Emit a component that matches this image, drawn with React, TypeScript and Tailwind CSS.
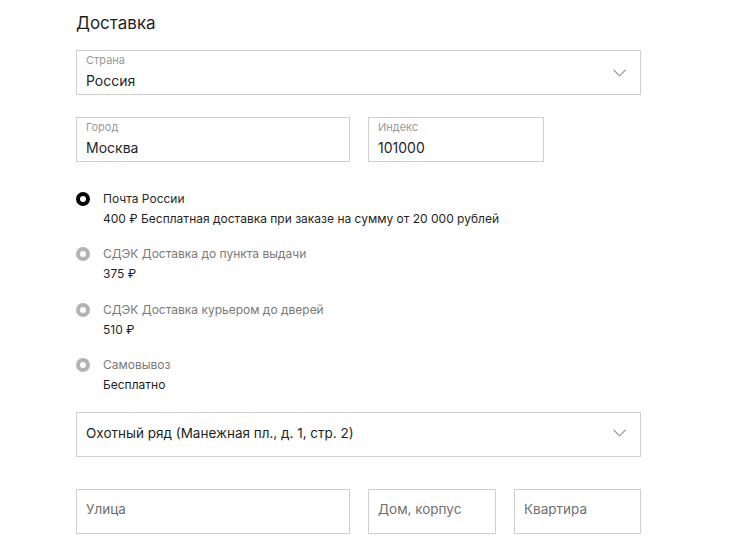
import { ChangeEvent, useState } from 'react';

interface DeliveryOption {
    id: string;
    title: string;
    description: string;
}

const options: DeliveryOption[] = [
    { id: 'post', title: 'Почта России', description: '400 ₽ Бесплатная доставка при заказе на сумму от 20 000 рублей' },
    { id: 'cdek-point', title: 'СДЭК Доставка до пункта выдачи', description: '375 ₽' },
    { id: 'cdek-courier', title: 'СДЭК Доставка курьером до дверей', description: '510 ₽' },
    { id: 'pickup', title: 'Самовывоз', description: 'Бесплатно' },
];

const Chevron = () => (
    <svg width="13" height="8" viewBox="0 0 13 8" fill="none" className="shrink-0">
        <polyline points="0.5,0.8 6.5,6.8 12.5,0.8" stroke="#8a8a8a" strokeWidth="1.1" />
    </svg>
);

function LabeledField({ label, value, className }: { label: string; value: string; className: string }) {
    return (
        <div className={`h-[45px] border border-[#cfcfcf] px-[9px] pt-[3px] ${className}`}>
            <div className="text-[11px] leading-[13px] text-[#9a9a9a]">{label}</div>
            <div className="mt-[5px] text-[14px] leading-[18px] text-[#1f1f1f]">{value}</div>
        </div>
    );
}

function PlaceholderField({ placeholder, className }: { placeholder: string; className: string }) {
    return (
        <div className={`h-[45px] border border-[#cfcfcf] px-[9px] pb-[4px] flex items-center ${className}`}>
            <span className="text-[13.5px] leading-[18px] text-[#6f6f6f]">{placeholder}</span>
        </div>
    );
}

export default function App() {
    const [selected, setSelected] = useState('post');

    return (
        <div className="w-[752px] h-[554px] bg-white pl-[76px] pt-[11px] font-['Inter',sans-serif] overflow-hidden">
            <h2 className="text-[17px] leading-[24px] font-normal text-[#1f1f1f]">Доставка</h2>

            <div className="mt-[15px] w-[565px] h-[45px] border border-[#cfcfcf] pl-[9px] pr-[14px] pt-[3px] flex justify-between">
                <div>
                    <div className="text-[11px] leading-[13px] text-[#9a9a9a]">Страна</div>
                    <div className="mt-[5px] text-[14px] leading-[18px] text-[#1f1f1f]">Россия</div>
                </div>
                <div className="flex items-center pb-[3px]">
                    <Chevron />
                </div>
            </div>

            <div className="mt-[22px] flex gap-[18px]">
                <LabeledField label="Город" value="Москва" className="w-[274px]" />
                <LabeledField label="Индекс" value="101000" className="w-[176px]" />
            </div>

            <div className="mt-[27px] flex flex-col gap-[15.3px]">
                {options.map((option) => {
                    const active = option.id === selected;
                    return (
                        <label key={option.id} className="flex cursor-pointer">
                            <input
                                type="radio"
                                name="delivery"
                                className="hidden"
                                checked={active}
                                onChange={(e: ChangeEvent<HTMLInputElement>) => e.target.checked && setSelected(option.id)}
                            />
                            <div className="w-[27px] h-[20px] flex items-center">
                                <span
                                    className={`w-[14px] h-[14px] rounded-full border-[4px] bg-white ${active ? 'border-black' : 'border-[#b3b3b3]'}`}
                                />
                            </div>
                            <div>
                                <div className={`text-[12px] leading-[20px] ${active ? 'text-[#2a2a2a]' : 'text-[#7a7a7a]'}`}>
                                    {option.title}
                                </div>
                                <div className="text-[12px] leading-[20px] text-[#1f1f1f]">{option.description}</div>
                            </div>
                        </label>
                    );
                })}
            </div>

            <div className="mt-[17px] w-[565px] h-[45px] border border-[#cfcfcf] pl-[9px] pr-[14px] pb-[3px] flex items-center justify-between">
                <span className="text-[13.5px] leading-[18px] text-[#1f1f1f]">Охотный ряд (Манежная пл., д. 1, стр. 2)</span>
                <Chevron />
            </div>

            <div className="mt-[32px] flex gap-[18px]">
                <PlaceholderField placeholder="Улица" className="w-[274px]" />
                <PlaceholderField placeholder="Дом, корпус" className="w-[128px]" />
                <PlaceholderField placeholder="Квартира" className="w-[127px]" />
            </div>
        </div>
    );
}
